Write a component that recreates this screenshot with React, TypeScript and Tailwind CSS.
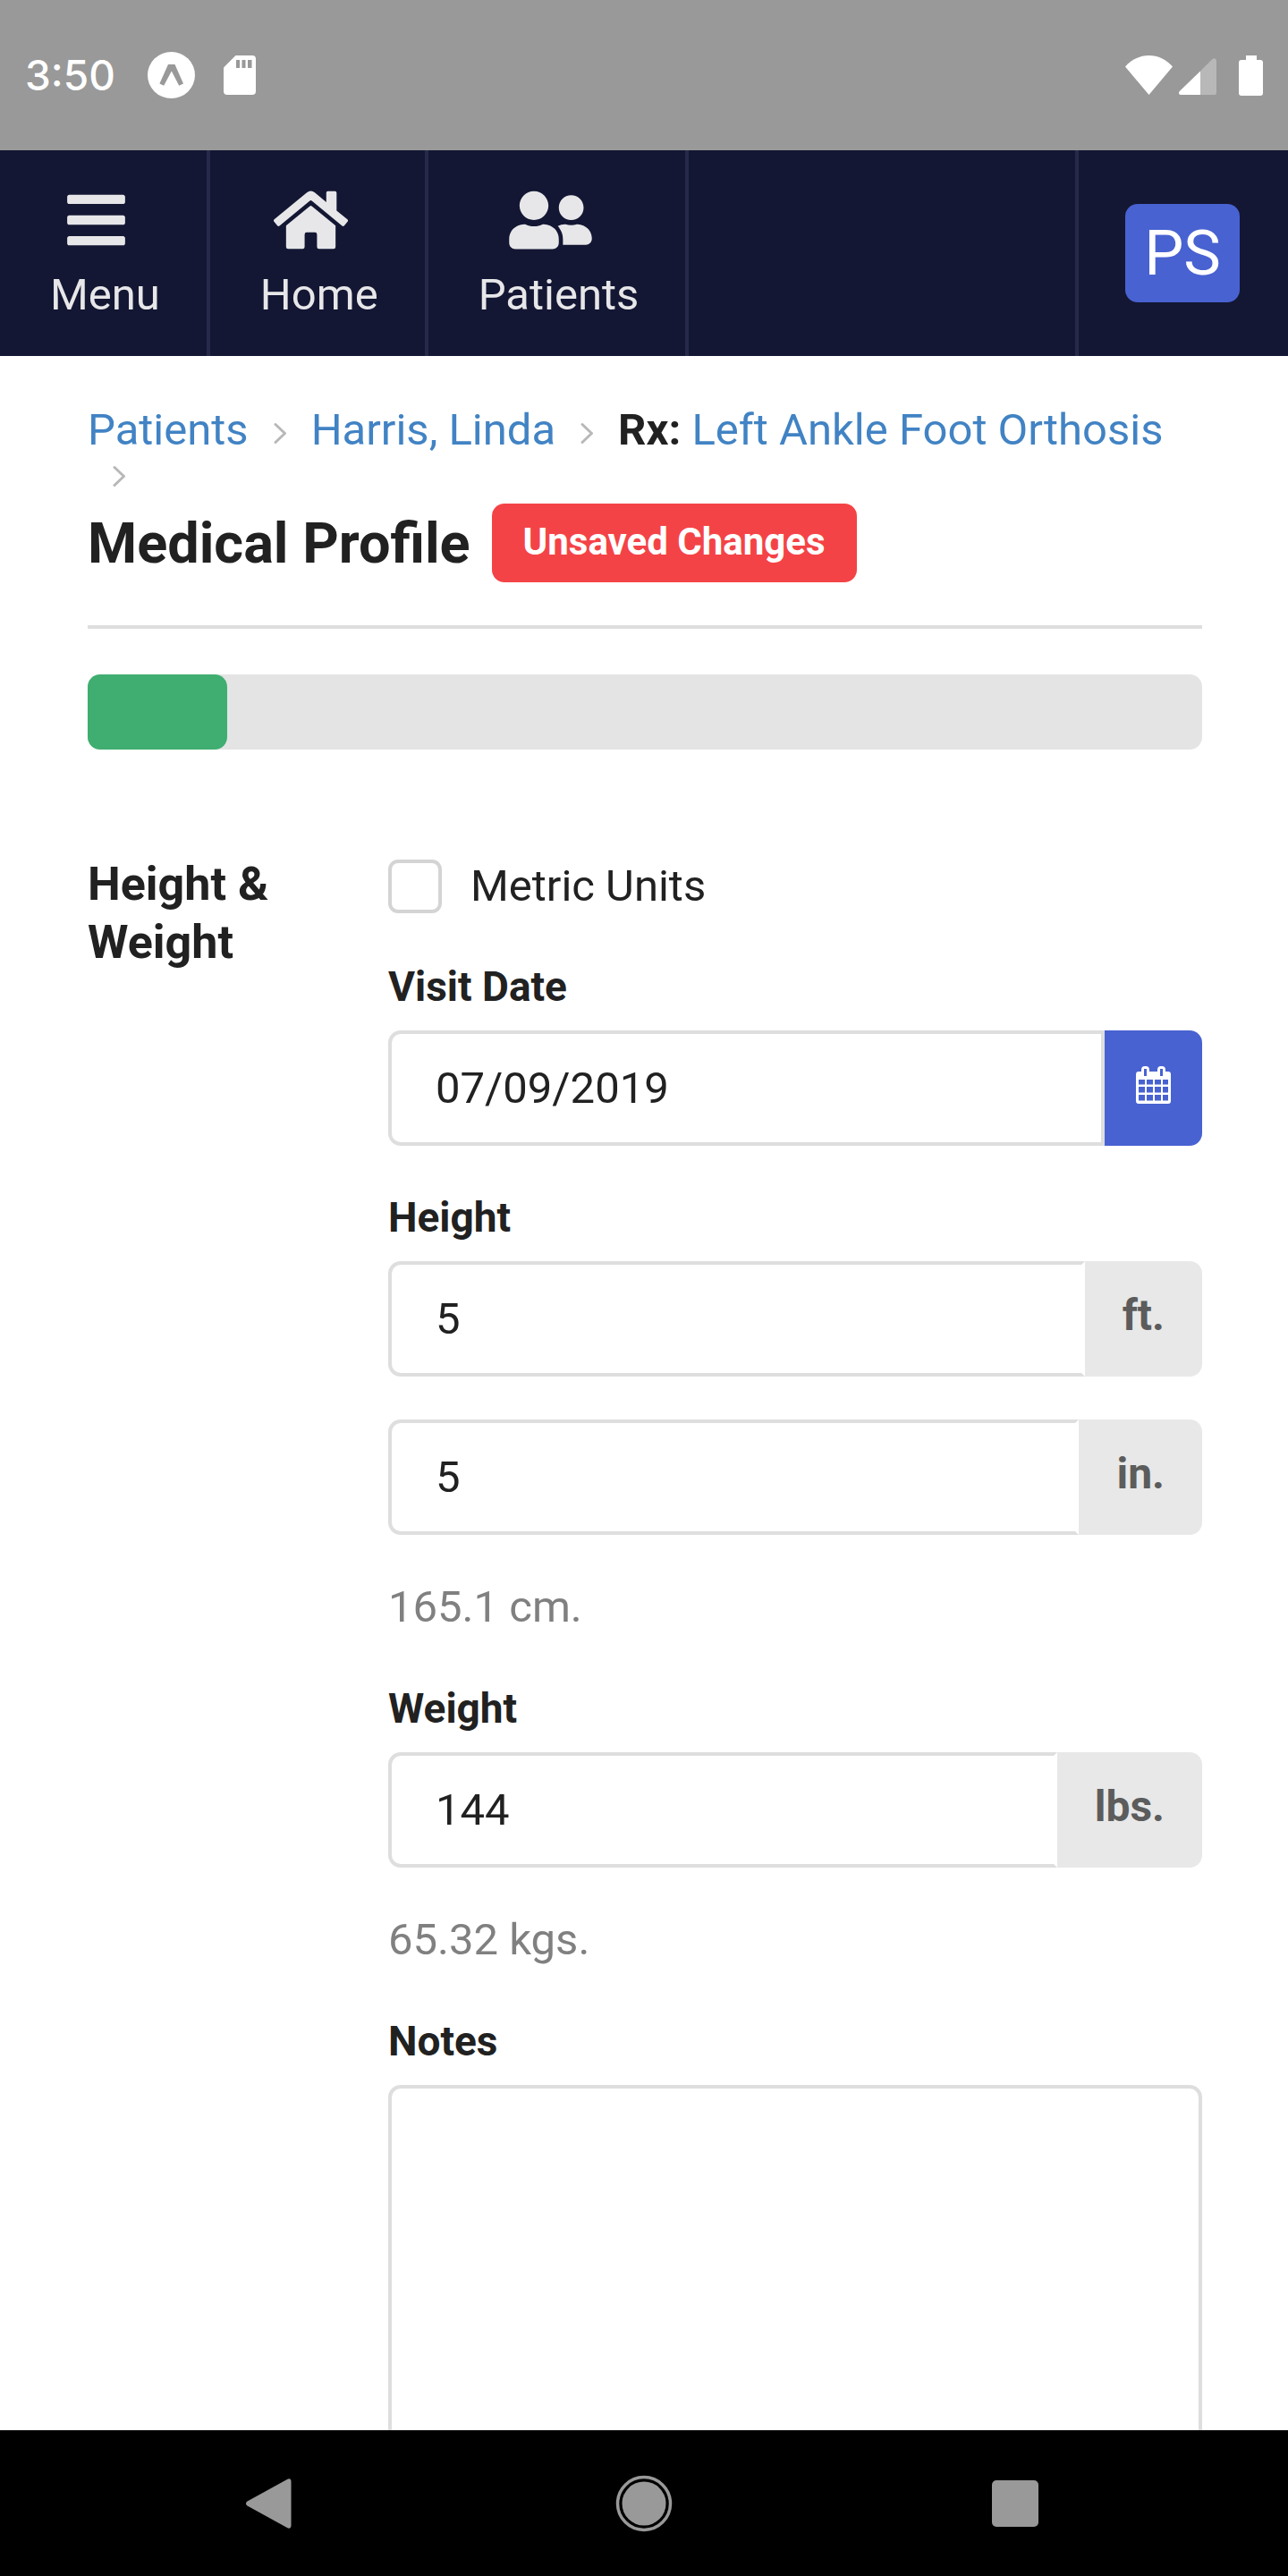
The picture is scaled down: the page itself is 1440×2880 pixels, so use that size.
import { useState, type ReactNode } from "react";
import { FaBars, FaHome, FaUserFriends } from "react-icons/fa";

type NavItemProps = {
  icon: ReactNode;
  label: string;
};

type UnitFieldProps = {
  id: string;
  label: string;
  unit: string;
  value: string;
  onChange: (value: string) => void;
};

const inputClass =
  "h-[129px] w-full min-w-0 flex-1 rounded-l-[14px] border-4 border-[#dededf] bg-white pl-[49px] text-[49px] text-[#212121] outline-none";
const labelClass = "mb-[25px] block text-[46px] leading-[47px] font-bold";
const hintClass = "mt-12 text-[49px] leading-[66px] text-[#808080]";

function StatusBar() {
  return (
    <div className="flex h-[168px] shrink-0 items-center justify-between bg-[#999999] px-7 text-white">
      <div className="flex items-center">
        <span className="w-[137px] font-[Inter,sans-serif] text-[46px] leading-[46px] font-medium">3:50</span>
        <svg className="h-[52px] w-[53px]" viewBox="0 0 53 52" aria-hidden="true">
          <ellipse cx="26.5" cy="26" rx="26.5" ry="26" fill="#fff" />
          <path
            d="M23 14h7.5L40 35.500l-4.800 2.300L26.800 21.500 18.200 37.800l-4.800-2.300z"
            fill="#999"
          />
        </svg>
        <svg className="ml-8 h-11 w-9" viewBox="0 0 36 44" aria-hidden="true">
          <path
            d="M13.500 0H32a4 4 0 0 1 4 4v36a4 4 0 0 1-4 4H4a4 4 0 0 1-4-4V13.500z"
            fill="#fff"
          />
          <path d="M14 5h4v9h-4zM20.500 5h4v9h-4zM27 5h4.500v9H27z" fill="#999" />
        </svg>
      </div>
      <div className="flex items-center">
        <svg className="h-11 w-[53px]" viewBox="0 0 53 44" aria-hidden="true">
          <path d="M0 12.500C7 4.500 16.500 0 26.500 0S46 4.500 53 12.500L26.500 44z" fill="#fff" />
        </svg>
        <svg className="ml-[7px] h-11 w-[42px]" viewBox="0 0 42 44" aria-hidden="true">
          <path d="M24 17.500 37.500 4c1.500-1.500 4.500-.8 4.500 2v36a2 2 0 0 1-2 2H24z" fill="#b8b8b8" />
          <path d="M24 17.500V44H2a2 2 0 0 1-2-2c0-1 .3-1.600 1-2.300z" fill="#fff" />
        </svg>
        <svg className="ml-[25px] h-[45px] w-[27px]" viewBox="0 0 27 45" aria-hidden="true">
          <path
            d="M8 0h12v5h4a3 3 0 0 1 3 3v34a3 3 0 0 1-3 3H3a3 3 0 0 1-3-3V8a3 3 0 0 1 3-3h5z"
            fill="#fff"
          />
        </svg>
      </div>
    </div>
  );
}

function NavItem({ icon, label }: NavItemProps) {
  return (
    <a
      href="#"
      className="flex flex-col items-center gap-[22px] border-r-4 border-[#26294a] pt-[41px] pr-[52px] pl-14 text-[49px] leading-[49px] text-[#e7e7e9]"
    >
      <span className="pr-[19px]">{icon}</span>
      {label}
    </a>
  );
}

function TopNav() {
  return (
    <nav className="flex h-[230px] shrink-0 bg-[#131733]">
      <NavItem icon={<FaBars className="h-[74px] w-[65px]" />} label="Menu" />
      <NavItem icon={<FaHome className="h-[74px] w-[83px]" />} label="Home" />
      <NavItem icon={<FaUserFriends className="h-[74px] w-[93px]" />} label="Patients" />
      <div className="ml-auto flex items-center border-l-4 border-[#26294a] pr-[54px] pl-[52px]">
        <button
          type="button"
          className="h-[110px] w-32 rounded-[14px] bg-[#4862d1] text-[70px] leading-[110px] text-white"
        >
          PS
        </button>
      </div>
    </nav>
  );
}

function Divider() {
  return (
    <svg
      className="mx-7 h-12 w-[14px]"
      viewBox="0 0 14 48"
      fill="none"
      stroke="#b8b8b8"
      strokeWidth="3"
      strokeLinecap="round"
      strokeLinejoin="round"
      aria-hidden="true"
    >
      <path d="M2 17.500 12.500 27.500 2 37.500" />
    </svg>
  );
}

function Breadcrumb() {
  return (
    <nav aria-label="Breadcrumb" className="flex flex-wrap items-center text-[49px] leading-[48px] text-[#4183c4]">
      <a href="#">Patients</a>
      <Divider />
      <a href="#">Harris, Linda</a>
      <Divider />
      <span>
        <strong className="text-[#212121]">Rx:</strong> <a href="#">Left Ankle Foot Orthosis</a>
      </span>
      <Divider />
    </nav>
  );
}

function CalendarIcon() {
  return (
    <svg className="h-[42px] w-[39px]" viewBox="0 0 39 42" aria-hidden="true">
      <path
        fill="#fff"
        fillRule="evenodd"
        d="M3 6h3V4a4 4 0 0 1 4-4h1a4 4 0 0 1 4 4v2h9V4a4 4 0 0 1 4-4h1a4 4 0 0 1 4 4v2h3a3 3 0 0 1 3 3v30a3 3 0 0 1-3 3H3a3 3 0 0 1-3-3V9a3 3 0 0 1 3-3zM9 3h3v8H9zM27 3h3v8h-3zM3 15h7v5.500H3zM12 15h7v5.500h-7zM21 15h7v5.500h-7zM30 15h6v5.500h-6zM3 23h7v6.500H3zM12 23h7v6.500h-7zM21 23h7v6.500h-7zM30 23h6v6.500h-6zM3 32h7v6.500H3zM12 32h7v6.500h-7zM21 32h7v6.500h-7zM30 32h6v6.500h-6z"
      />
    </svg>
  );
}

function UnitInput({ id, label, unit, value, onChange }: UnitFieldProps) {
  return (
    <div className="flex">
      <input
        id={id}
        type="text"
        inputMode="numeric"
        aria-label={label}
        value={value}
        onChange={(e) => onChange(e.target.value)}
        className={`${inputClass} border-r-transparent`}
      />
      <span className="flex items-center rounded-r-[14px] bg-[#e8e8e8] px-[42px] pb-2 text-[48px] leading-[48px] font-bold text-[#5c5c5c]">
        {unit}
      </span>
    </div>
  );
}

function BottomNav() {
  return (
    <div className="grid h-[163px] shrink-0 grid-cols-3 items-center justify-items-center bg-black px-[98px]">
      <button type="button" aria-label="Back">
        <svg className="h-16 w-16" viewBox="0 0 64 64" fill="#999">
          <path d="M3.500 29.500 48 5c2.500-1.500 4.500-.5 4.500 2.500v49c0 3-2 4-4.500 2.500L3.500 34.500c-2-1.300-2-3.700 0-5z" />
        </svg>
      </button>
      <button type="button" aria-label="Home">
        <svg className="h-16 w-16" viewBox="0 0 64 64">
          <circle cx="32" cy="32" r="29.500" fill="none" stroke="#999" strokeWidth="3.500" />
          <circle cx="32" cy="32" r="24.500" fill="#999" />
        </svg>
      </button>
      <button type="button" aria-label="Recent apps">
        <svg className="h-16 w-16" viewBox="0 0 64 64" fill="#999">
          <rect x="6" y="6" width="52" height="52" rx="5" />
        </svg>
      </button>
    </div>
  );
}

export default function App() {
  const [metric, setMetric] = useState(false);
  const [visitDate, setVisitDate] = useState("07/09/2019");
  const [feet, setFeet] = useState("5");
  const [inches, setInches] = useState("5");
  const [weight, setWeight] = useState("144");
  const [notes, setNotes] = useState("");

  const cm = (Number(feet) * 12 + Number(inches)) * 2.54;
  const kgs = Number(weight) * 0.453592;

  return (
    <div className="flex h-screen flex-col bg-white font-[Roboto,sans-serif] text-[#212121]">
      <StatusBar />
      <TopNav />

      <main className="min-h-0 flex-1 overflow-y-auto pt-[59px] pr-24 pl-[98px] [scrollbar-width:none]">
        <Breadcrumb />
        <div className="mt-[10px] flex items-center gap-6 border-b-4 border-[#dededf] pb-12">
          <h1 className="text-[63px] leading-[63px] font-bold">Medical Profile</h1>
          <span className="rounded-[14px] bg-[#f44346] px-[35px] pt-[21px] pb-6 text-[42px] leading-[43px] font-bold text-white">
            Unsaved Changes
          </span>
        </div>

        {/* Completion progress */}
        <div className="mt-[51px] h-[84px] rounded-[14px] bg-[#e4e4e4]">
          <div className="h-full w-1/8 rounded-[14px] bg-[#3fae70]" />
        </div>

        <form className="mt-[118px] grid grid-cols-[336px_1fr]">
          <h2 className="text-[52px] leading-[65px] font-bold">
            Height &amp;
            <br />
            Weight
          </h2>

          <div className="flex flex-col gap-[57px] pt-[2px]">
            <label className="flex items-center gap-8 text-[49px] leading-[65px]">
              <input
                type="checkbox"
                checked={metric}
                onChange={(e) => setMetric(e.target.checked)}
                className="size-[60px] appearance-none rounded-[11px] border-4 border-[#d4d4d5] bg-white checked:bg-[#4862d1]"
              />
              Metric Units
            </label>

            <div>
              <label htmlFor="visit-date" className={labelClass}>
                Visit Date
              </label>
              <div className="flex">
                <input
                  id="visit-date"
                  type="text"
                  value={visitDate}
                  onChange={(e) => setVisitDate(e.target.value)}
                  className={inputClass}
                />
                <button
                  type="button"
                  aria-label="Pick a date"
                  className="flex w-[109px] items-center justify-center rounded-r-[14px] bg-[#4862d1] pb-2"
                >
                  <CalendarIcon />
                </button>
              </div>
            </div>

            <div>
              <label htmlFor="height-ft" className={labelClass}>
                Height
              </label>
              <div className="flex flex-col gap-12">
                <UnitInput id="height-ft" label="Height in feet" unit="ft." value={feet} onChange={setFeet} />
                <UnitInput id="height-in" label="Height in inches" unit="in." value={inches} onChange={setInches} />
              </div>
              <p className={hintClass}>{cm.toFixed(1)} cm.</p>
            </div>

            <div>
              <label htmlFor="weight" className={labelClass}>
                Weight
              </label>
              <UnitInput id="weight" label="Weight in pounds" unit="lbs." value={weight} onChange={setWeight} />
              <p className={hintClass}>{kgs.toFixed(2)} kgs.</p>
            </div>

            <div>
              <label htmlFor="notes" className={labelClass}>
                Notes
              </label>
              <textarea
                id="notes"
                value={notes}
                onChange={(e) => setNotes(e.target.value)}
                className="block h-[600px] w-full resize-none rounded-[14px] border-4 border-[#dededf] px-[49px] py-8 text-[49px] outline-none"
              />
            </div>
          </div>
        </form>
      </main>

      <BottomNav />
    </div>
  );
}
